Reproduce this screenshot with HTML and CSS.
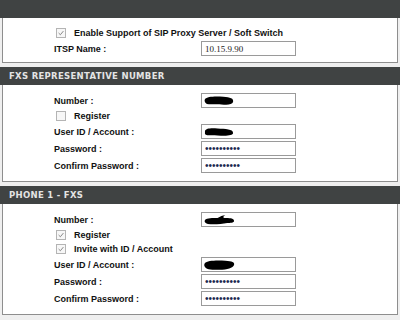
FILE: index.html
```html
<!DOCTYPE html>
<html lang="en">
<head>
    <meta charset="UTF-8">
    <meta name="viewport" content="width=device-width, initial-scale=1.0">
    <title>Voice Settings</title>
    <link rel="stylesheet" href="styles.css">
</head>
<body>
    <div class="box">
        <h2>&nbsp;</h2>
        <div class="box-body first">
            <div class="check-row">
                <span class="check on"><svg viewBox="0 0 10 10"><path d="M2 5 L4.2 7.2 L8 2.6"/></svg></span>
                <span class="check-text">Enable Support of SIP Proxy Server / Soft Switch</span>
            </div>
            <div class="row">
                <label>ITSP Name :</label>
                <input type="text" class="plain" value="10.15.9.90" readonly>
            </div>
        </div>
    </div>

    <div class="box">
        <h2>FXS REPRESENTATIVE NUMBER</h2>
        <div class="box-body">
            <div class="row">
                <label>Number :</label>
                <div class="field">
                    <svg class="blob" viewBox="0 0 32 12"><path d="M1 4 C3 1 12 1 20 1.5 C27 2 31 3 30 7 C29 10 24 10 18 9.5 C12 9 6 10 3 9 C1 8 0 6 1 4 Z"/></svg>
                </div>
            </div>
            <div class="check-row">
                <span class="check"></span>
                <span class="check-text">Register</span>
            </div>
            <div class="row">
                <label>User ID / Account :</label>
                <div class="field">
                    <svg class="blob" viewBox="0 0 32 12"><path d="M1 5 C2 2 8 2 14 2.5 C22 3 30 3 30 7 C30 10 22 10 14 9.5 C8 9 2 10 1 8 Z"/></svg>
                </div>
            </div>
            <div class="row">
                <label>Password :</label>
                <input type="password" value="0123456789" readonly>
            </div>
            <div class="row">
                <label>Confirm Password :</label>
                <input type="password" value="0123456789" readonly>
            </div>
        </div>
    </div>

    <div class="box">
        <h2>PHONE 1 - FXS</h2>
        <div class="box-body">
            <div class="row">
                <label>Number :</label>
                <div class="field">
                    <svg class="blob" viewBox="0 0 32 12"><path d="M1 6 C3 4 9 4 14 4 C17 2 19 1 22 1 C20 2 19 3 21 4 C26 4 31 4 31 7 C31 9 27 9 24 9 C18 10 10 11 4 10 C1 9 0 8 1 6 Z"/></svg>
                </div>
            </div>
            <div class="check-row">
                <span class="check on"><svg viewBox="0 0 10 10"><path d="M2 5 L4.2 7.2 L8 2.6"/></svg></span>
                <span class="check-text">Register</span>
            </div>
            <div class="check-row">
                <span class="check on"><svg viewBox="0 0 10 10"><path d="M2 5 L4.2 7.2 L8 2.6"/></svg></span>
                <span class="check-text">Invite with ID / Account</span>
            </div>
            <div class="row">
                <label>User ID / Account :</label>
                <div class="field">
                    <svg class="blob" viewBox="0 0 32 12"><path d="M1 4 C3 1 14 1 22 1.5 C29 2 32 3 31 6 C30 9 24 11 16 11 C9 11 3 11 1 8 C0 7 0 5 1 4 Z"/></svg>
                </div>
            </div>
            <div class="row">
                <label>Password :</label>
                <input type="password" value="0123456789" readonly>
            </div>
            <div class="row">
                <label>Confirm Password :</label>
                <input type="password" value="0123456789" readonly>
            </div>
        </div>
    </div>
</body>
</html>
```

FILE: styles.css
```css
body {
    margin: 0;
    padding: 0;
    background-color: #efefef;
    font-family: "Liberation Sans", Arial, sans-serif;
    font-size: 9px;
    color: #111;
}

.box {
    margin-bottom: 4px;
}

.box h2 {
    margin: 0;
    height: 18px;
    line-height: 19px;
    padding-left: 9px;
    background-color: #404343;
    color: #e4e4e4;
    font-family: "DejaVu Sans", Verdana, sans-serif;
    font-size: 8.5px;
    font-weight: bold;
    letter-spacing: 0.3px;
}

.box-body {
    margin: 0 2px;
    background-color: #fff;
    border: 1px solid #8e8e8e;
    border-top: none;
    padding: 7px 0 7px 51px;
}

.box-body.first {
    padding-top: 8px;
    padding-bottom: 5px;
}

.row {
    display: flex;
    align-items: center;
    height: 17px;
}

.row label {
    width: 147px;
    font-weight: bold;
}

.row input,
.field {
    box-sizing: border-box;
    width: 95px;
    height: 15px;
    margin: 0;
    padding: 0 3px;
    border: 1px solid #9a9a9a;
    border-radius: 0;
    background: #fff;
    outline: none;
}

.row input.plain {
    font-family: "Liberation Serif", serif;
    font-size: 9px;
    color: #222;
}

.row input[type="password"] {
    font-family: "Liberation Sans", sans-serif;
    font-size: 10px;
    color: #1c2a50;
}

.field {
    display: flex;
    align-items: center;
    padding-left: 2px;
}

.blob {
    width: 31px;
    height: 12px;
    fill: #000;
}

.check-row {
    display: flex;
    align-items: center;
    height: 14px;
}

.check {
    box-sizing: border-box;
    width: 10px;
    height: 10px;
    margin-left: 2px;
    margin-right: 8px;
    border: 1px solid #b4b4b4;
    background: #f7f7f7;
    display: flex;
}

.check svg {
    width: 8px;
    height: 8px;
    fill: none;
    stroke: #7a7a7a;
    stroke-width: 1.1;
}

.check-text {
    font-weight: bold;
}
```
